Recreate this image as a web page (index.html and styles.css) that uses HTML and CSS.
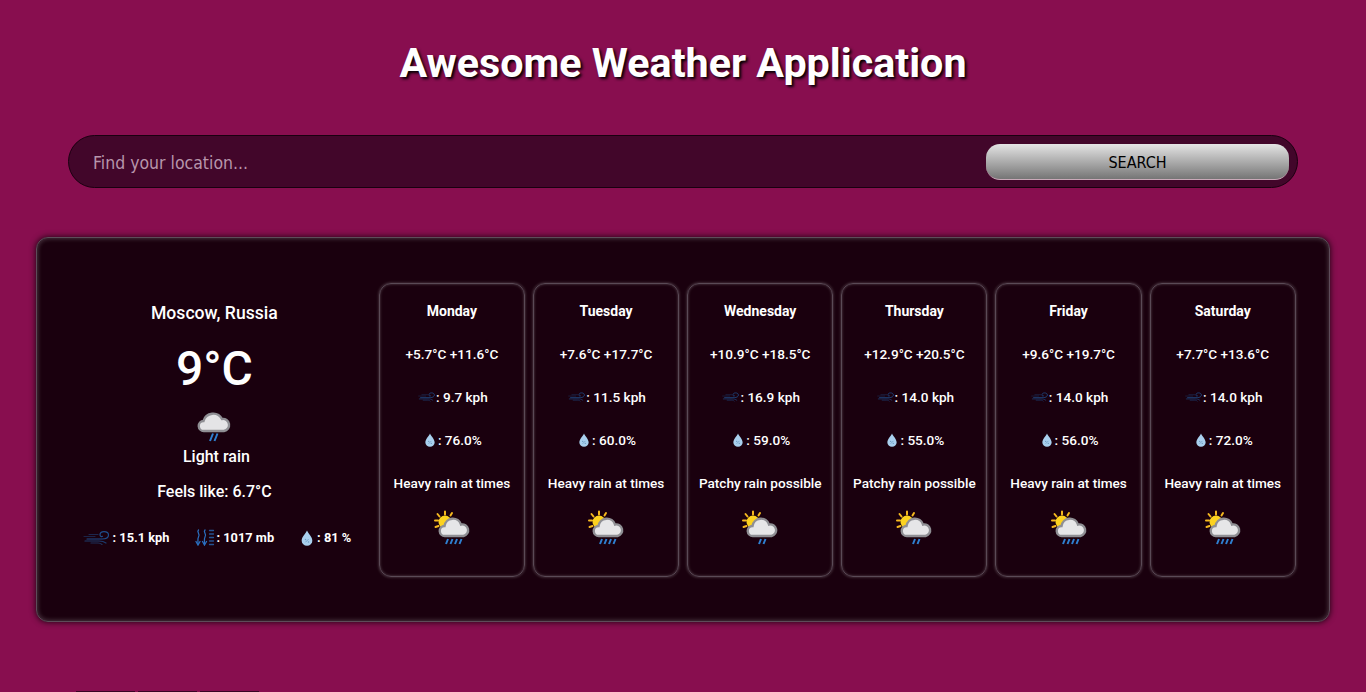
FILE: index.html
```html
<!DOCTYPE html>
<html lang="en">
<head>
<meta charset="utf-8">
<title>Awesome Weather Application</title>
<link rel="stylesheet" href="styles.css">
</head>
<body>
<svg class="defs" width="0" height="0" aria-hidden="true">
  <defs>
    <symbol id="wind" viewBox="0 0 28 14">
      <g fill="none" stroke="#1f4e8c" stroke-width="1.200" stroke-linecap="round">
        <path d="M1 5.500h11" opacity=".45"/>
        <path d="M4 8h15c4 0 6.500-1.800 6.500-4S23.500.6 21 .6s-4 1.500-4 3.200 1.500 2 2.500 1.500"/>
        <path d="M2 10h14c3 0 5 .5 7 2" opacity=".75"/>
        <path d="M8 12h7c2 0 3 .5 4 1.500" opacity=".6"/>
        <path d="M6 3.500h9" opacity=".5"/>
      </g>
    </symbol>
    <symbol id="pressure" viewBox="0 0 20 17">
      <g fill="none" stroke="#2a6fc0" stroke-width="1.300" stroke-linecap="round">
        <path d="M3.500 1c-2.500 2.500 2.500 4 0 7-1 1.500-.5 3-.5 7"/>
        <path d="M10 1c-2.500 2.500 2.500 4 0 7-1 1.500-.5 3-.5 7"/>
        <path d="M1 12.500l2 3.500 2-3.500M7.500 12.500l2 3.500 2-3.500"/>
        <path d="M14.500 1.500h4M14.500 5h4M14.500 8.500h4M14.500 12h4M14.500 15.500h4" opacity=".75"/>
      </g>
    </symbol>
    <symbol id="drop" viewBox="0 0 12 15">
      <path d="M6 .5C5 3 1 6.500 1 10a5 4.800 0 0 0 10 0C11 6.500 7 3 6 .5z" fill="#a9d0ee"/>
      <path d="M4.500 11.500l3-3" stroke="#6d9cc2" stroke-width=".8"/>
      <circle cx="4.600" cy="9" r=".7" fill="#6d9cc2"/>
      <circle cx="7.400" cy="11.200" r=".7" fill="#6d9cc2"/>
    </symbol>
    <symbol id="cloud-rain" viewBox="0 0 36 36">
      <path d="M8 24a5 5 0 0 1-.5-10A10 10 0 0 1 26 12a6 6 0 0 1 2 12z" fill="#e4e4e6" stroke="#8f8f94" stroke-width="2.400"/>
      <path d="M14 34l3-7.500M18.500 34l3-7.500" stroke="#2f7fd0" stroke-width="2"/>
    </symbol>
    <symbol id="sun-heavy" viewBox="0 0 36 36">
      <g stroke="#f5b81f" stroke-width="2" stroke-linecap="round">
        <path d="M11 1.500v3M3.500 4l2 2.500M18 3l-1.500 2.500M1 10.500h3M1.500 17l3-1"/>
      </g>
      <circle cx="11" cy="12" r="6.500" fill="#fcd21f"/>
      <path d="M11 26a5 5 0 0 1-.5-10A8.500 8.500 0 0 1 27 14.500a5.800 5.800 0 0 1 2.500 11.500z" fill="#e6e6e8" stroke="#8f8f94" stroke-width="2.400"/>
      <path d="M12 34l2-5M16.500 34l2-5M21 34l2-5M25.500 34l2-5" stroke="#2f7fd0" stroke-width="2"/>
    </symbol>
    <symbol id="sun-patchy" viewBox="0 0 36 36">
      <g stroke="#f5b81f" stroke-width="2" stroke-linecap="round">
        <path d="M11 1.500v3M3.500 4l2 2.500M18 3l-1.500 2.500M1 10.500h3M1.500 17l3-1"/>
      </g>
      <circle cx="11" cy="12" r="6.500" fill="#fcd21f"/>
      <path d="M11 26a5 5 0 0 1-.5-10A8.500 8.500 0 0 1 27 14.500a5.800 5.800 0 0 1 2.500 11.500z" fill="#e6e6e8" stroke="#8f8f94" stroke-width="2.400"/>
      <path d="M17 34l2-5M21.500 34l2-5" stroke="#2f7fd0" stroke-width="2"/>
    </symbol>
  </defs>
</svg>

<h1 class="title">Awesome Weather Application</h1>

<form class="search">
  <input class="search-input" type="text" placeholder="Find your location...">
  <button class="search-button" type="button">SEARCH</button>
</form>

<main class="panel">
  <section class="current">
    <p class="location">Moscow, Russia</p>
    <p class="temp">9°C</p>
    <svg class="current-icon"><use href="#cloud-rain"/></svg>
    <p class="condition">Light rain</p>
    <p class="feels">Feels like: 6.7°C</p>
    <div class="stats">
      <span class="stat"><svg class="icon-wind-lg"><use href="#wind"/></svg>: 15.1 kph</span>
      <span class="stat"><svg class="icon-pressure"><use href="#pressure"/></svg>: 1017 mb</span>
      <span class="stat"><svg class="icon-drop-lg"><use href="#drop"/></svg>: 81 %</span>
    </div>
  </section>

  <section class="days">
    <article class="day">
      <p class="day-name">Monday</p>
      <p>+5.7°C +11.6°C</p>
      <p class="day-stat"><svg class="icon-wind"><use href="#wind"/></svg>: 9.7 kph</p>
      <p class="day-stat"><svg class="icon-drop"><use href="#drop"/></svg>: 76.0%</p>
      <p>Heavy rain at times</p>
      <svg class="day-icon"><use href="#sun-heavy"/></svg>
    </article>
    <article class="day">
      <p class="day-name">Tuesday</p>
      <p>+7.6°C +17.7°C</p>
      <p class="day-stat"><svg class="icon-wind"><use href="#wind"/></svg>: 11.5 kph</p>
      <p class="day-stat"><svg class="icon-drop"><use href="#drop"/></svg>: 60.0%</p>
      <p>Heavy rain at times</p>
      <svg class="day-icon"><use href="#sun-heavy"/></svg>
    </article>
    <article class="day">
      <p class="day-name">Wednesday</p>
      <p>+10.9°C +18.5°C</p>
      <p class="day-stat"><svg class="icon-wind"><use href="#wind"/></svg>: 16.9 kph</p>
      <p class="day-stat"><svg class="icon-drop"><use href="#drop"/></svg>: 59.0%</p>
      <p>Patchy rain possible</p>
      <svg class="day-icon"><use href="#sun-patchy"/></svg>
    </article>
    <article class="day">
      <p class="day-name">Thursday</p>
      <p>+12.9°C +20.5°C</p>
      <p class="day-stat"><svg class="icon-wind"><use href="#wind"/></svg>: 14.0 kph</p>
      <p class="day-stat"><svg class="icon-drop"><use href="#drop"/></svg>: 55.0%</p>
      <p>Patchy rain possible</p>
      <svg class="day-icon"><use href="#sun-patchy"/></svg>
    </article>
    <article class="day">
      <p class="day-name">Friday</p>
      <p>+9.6°C +19.7°C</p>
      <p class="day-stat"><svg class="icon-wind"><use href="#wind"/></svg>: 14.0 kph</p>
      <p class="day-stat"><svg class="icon-drop"><use href="#drop"/></svg>: 56.0%</p>
      <p>Heavy rain at times</p>
      <svg class="day-icon"><use href="#sun-heavy"/></svg>
    </article>
    <article class="day">
      <p class="day-name">Saturday</p>
      <p>+7.7°C +13.6°C</p>
      <p class="day-stat"><svg class="icon-wind"><use href="#wind"/></svg>: 14.0 kph</p>
      <p class="day-stat"><svg class="icon-drop"><use href="#drop"/></svg>: 72.0%</p>
      <p>Heavy rain at times</p>
      <svg class="day-icon"><use href="#sun-heavy"/></svg>
    </article>
  </section>
</main>

<div class="more">
  <div class="more-item"></div>
  <div class="more-item"></div>
  <div class="more-item"></div>
</div>
</body>
</html>
```
FILE: styles.css
```css
* { box-sizing: border-box; }
html { height: 692px; overflow: hidden; }
body {
  margin: 0;
  background: #880e4f;
  color: #fff;
  font-family: Roboto, "Liberation Sans", sans-serif;
  display: flex;
  flex-direction: column;
  align-items: center;
}
p { margin: 0; }
.defs { position: absolute; }

.title {
  margin: 40px 0 0;
  font-size: 41.25px;
  line-height: 47px;
  font-weight: 700;
  text-shadow: 2px 2px 3px #000;
}

.search {
  margin-top: 48px;
  width: 1230px;
  height: 53px;
  border: 1px solid #1a0010;
  border-radius: 27px;
  background: #42062a;
  display: flex;
  align-items: center;
  padding: 0 8px 0 24px;
}
.search-input {
  flex: 1;
  min-width: 0;
  border: 0;
  outline: 0;
  padding: 3px 0 0;
  background: transparent;
  color: #fff;
  font-family: "DejaVu Sans", sans-serif;
  font-stretch: condensed;
  font-size: 17.5px;
}
.search-input::placeholder { color: #b795ab; opacity: 1; }
.search-button {
  width: 303px;
  height: 36px;
  border: 0;
  border-bottom: 1px solid #c9a9b8;
  border-radius: 14px;
  padding-top: 3px;
  background: linear-gradient(#e4e4e4, #757575);
  color: #000;
  font-family: "DejaVu Sans", sans-serif;
  font-stretch: condensed;
  font-size: 16px;
}

.panel {
  margin-top: 49px;
  width: 1294px;
  height: 385px;
  border: 1px solid #5d4c59;
  border-radius: 12px;
  background: #1a000e;
  box-shadow: 0 0 6px rgba(0,0,0,.85), inset 0 0 4px 1px rgba(255,255,255,.2);
  display: flex;
  align-items: flex-start;
  padding: 45px 33.2px 0 13px;
}

.current {
  width: 328.8px;
  flex: none;
  display: flex;
  flex-direction: column;
  align-items: center;
  text-align: center;
}
.location { margin-top: 20px; font-size: 17.6px; line-height: 21px; font-weight: 500; }
.temp { margin-top: 17px; font-size: 48px; line-height: 56px; font-weight: 500; }
.current-icon { margin-top: 10px; width: 36px; height: 36px; }
.condition { margin-top: 4px; padding-left: 4px; font-size: 16px; line-height: 19px; font-weight: 500; }
.feels { margin-top: 16px; font-size: 16px; line-height: 19px; font-weight: 500; }
.stats {
  margin-top: 28px;
  padding-left: 5px;
  display: flex;
  gap: 26px;
  font-size: 12.8px;
  font-weight: 700;
  line-height: 16px;
}
.stat { display: flex; align-items: center; white-space: nowrap; }
.icon-wind-lg { width: 28px; height: 14px; margin-right: 2px; }
.icon-pressure { width: 20px; height: 17px; margin-right: 1px; }
.icon-drop-lg { width: 14px; height: 16px; margin-right: 3px; }

.days { flex: 1; display: flex; gap: 8px; }
.day {
  flex: 1;
  height: 294px;
  border: 1px solid #5a4a56;
  border-radius: 12px;
  box-shadow: 0 0 3px rgba(255,255,255,.3), inset 0 0 3px rgba(255,255,255,.28);
  display: flex;
  flex-direction: column;
  align-items: center;
  gap: 27px;
  padding-top: 19px;
  font-size: 13.6px;
  line-height: 16px;
  font-weight: 500;
  white-space: nowrap;
  text-align: center;
}
.day p { display: flex; align-items: center; }
.day .day-stat { padding-left: 2px; }
.day-name { font-size: 14px; font-weight: 700; }
.icon-wind { width: 18px; height: 10px; }
.icon-drop { width: 12px; height: 14px; margin-right: 2px; }
.day-icon { width: 36px; height: 36px; margin-top: -8px; }

.more {
  margin-top: 69px;
  align-self: flex-start;
  margin-left: 76px;
  display: flex;
  gap: 3px;
}
.more-item {
  width: 59px;
  height: 1px;
  background: #3a0424;
}
```
